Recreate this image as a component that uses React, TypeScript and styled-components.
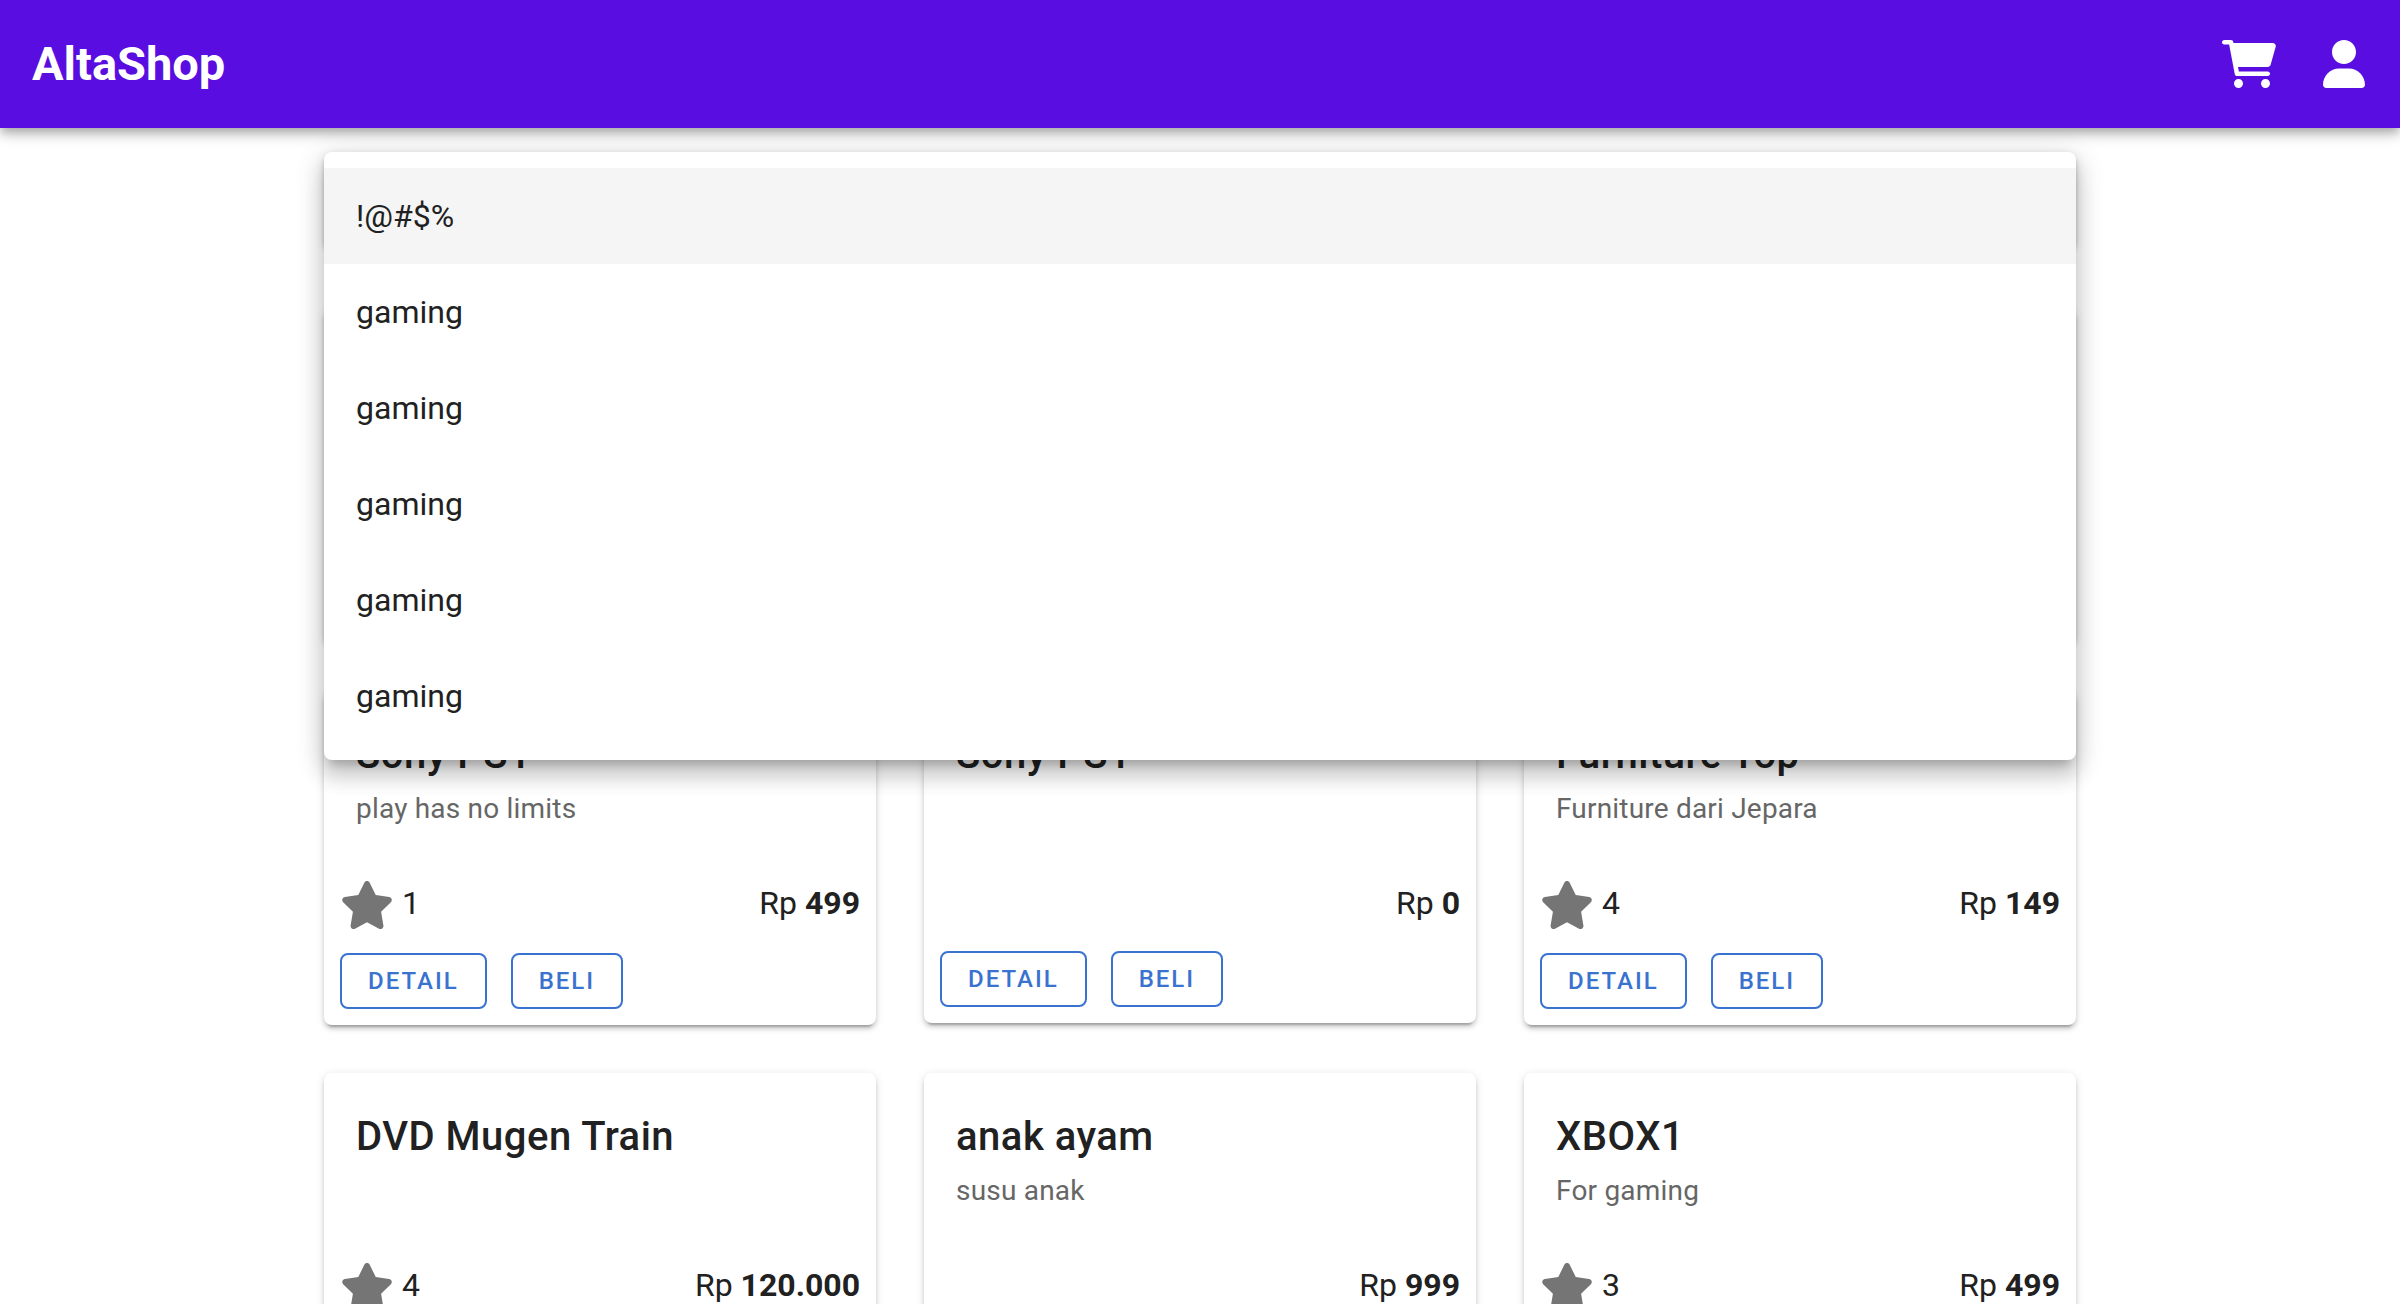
import React from "react";
import styled, { createGlobalStyle } from "styled-components";

const GlobalStyle = createGlobalStyle`
  *, *::before, *::after { box-sizing: border-box; }
  body {
    margin: 0;
    background: #ffffff;
    color: #212121;
    font-family: Roboto, "Liberation Sans", sans-serif;
    font-size: 32px;
    line-height: 48px;
  }
  h1, h2, p, ul { margin: 0; padding: 0; }
`;

const raised =
  "0 6px 2px -4px rgba(0,0,0,.2), 0 4px 4px 0 rgba(0,0,0,.14), 0 2px 10px 0 rgba(0,0,0,.12)";

const Page = styled.div`
  height: 100vh;
  overflow-y: auto;
  scrollbar-width: none;
`;

const AppBar = styled.header`
  display: flex;
  align-items: center;
  justify-content: space-between;
  height: 128px;
  padding: 0 35px 0 32px;
  background: #590de1;
  color: #ffffff;
  box-shadow: 0 4px 8px -2px rgba(0,0,0,.2), 0 8px 10px 0 rgba(0,0,0,.14),
    0 2px 20px 0 rgba(0,0,0,.12);
`;

const Brand = styled.h1`
  font-size: 47px;
  line-height: 64px;
  font-weight: 700;
`;

const Actions = styled.nav`
  display: flex;
  gap: 47px;
`;

const IconButton = styled.button`
  display: flex;
  padding: 0;
  border: 0;
  background: none;
  color: inherit;
  cursor: pointer;
`;

const Icon = styled.svg`
  display: block;
  height: 48px;
  width: auto;
  fill: currentColor;
`;

const Container = styled.main`
  max-width: 1800px;
  margin: 0 auto;
  padding: 24px;
`;

const Filter = styled.div`
  position: relative;
  margin-bottom: 61px;
`;

const FilterSelect = styled.select`
  display: block;
  width: 100%;
  height: 96px;
  padding: 0 24px;
  border: 0;
  border-radius: 8px;
  background: #ffffff;
  color: inherit;
  font: inherit;
  appearance: none;
  box-shadow: ${raised};
`;

const Menu = styled.ul`
  position: absolute;
  z-index: 8;
  top: 0;
  left: 0;
  right: 0;
  padding: 16px 0;
  border-radius: 8px;
  background: #ffffff;
  list-style: none;
  box-shadow: 0 10px 10px -6px rgba(0,0,0,.2), 0 16px 20px 2px rgba(0,0,0,.14),
    0 6px 28px 4px rgba(0,0,0,.12);
`;

const MenuItem = styled.li<{ $active: boolean }>`
  padding: 24px 32px;
  background: ${(p) => (p.$active ? "#f5f5f5" : "transparent")};
  cursor: pointer;
`;

const Grid = styled.div`
  display: grid;
  grid-template-columns: repeat(3, 1fr);
  align-items: start;
  gap: 48px;
`;

const Card = styled.article`
  border-radius: 8px;
  background: #ffffff;
  box-shadow: ${raised};
`;

const EmptyCard = styled(Card)`
  min-height: 334px;
`;

const CardHead = styled.div`
  padding: 32px;
`;

const CardTitle = styled.h2`
  font-size: 40px;
  line-height: 64px;
  font-weight: 500;
  letter-spacing: 0.0125em;
`;

const CardSubtitle = styled.p`
  min-height: 44px;
  font-size: 28px;
  line-height: 44px;
  color: #666666;
  letter-spacing: 0.007em;
`;

const CardInfo = styled.div`
  display: flex;
  align-items: flex-start;
  justify-content: space-between;
  padding: 16px 16px 8px;
`;

const Rating = styled.div`
  display: flex;
  gap: 8px;
`;

const StarIcon = styled(Icon)`
  margin-top: 2px;
  color: #757575;
`;

const Price = styled.div`
  b { font-weight: 700; }
`;

const CardActions = styled.div`
  display: flex;
  gap: 24px;
  padding: 16px;
`;

const OutlineButton = styled.button`
  height: 56px;
  padding: 0 26px;
  border: 2px solid #3973cf;
  border-radius: 8px;
  background: transparent;
  color: #3973cf;
  font: 500 24px/24px Roboto, "Liberation Sans", sans-serif;
  letter-spacing: 2px;
  text-transform: uppercase;
  cursor: pointer;
`;

const categories = ["!@#$%", "gaming", "gaming", "gaming", "gaming", "gaming"];

type Product = { name: string; description?: string; rating?: number; price: string };

const products: Product[] = [
  { name: "Sony PS1", description: "play has no limits", rating: 1, price: "499" },
  { name: "Sony PS1", price: "0" },
  { name: "Furniture Top", description: "Furniture dari Jepara", rating: 4, price: "149" },
  { name: "DVD Mugen Train", rating: 4, price: "120.000" },
  { name: "anak ayam", description: "susu anak", price: "999" },
  { name: "XBOX1", description: "For gaming", rating: 3, price: "499" },
];

function ProductCard({ name, description, rating, price }: Product) {
  return (
    <Card>
      <CardHead>
        <CardTitle>{name}</CardTitle>
        <CardSubtitle>{description}</CardSubtitle>
      </CardHead>
      <CardInfo>
        <Rating>
          {rating !== undefined && (
            <>
              <StarIcon viewBox="0 0 576 512" aria-hidden="true">
                <path d="M381.2 150.3L524.9 171.5C536.8 173.2 546.8 181.6 550.6 193.1C554.4 204.7 551.3 217.3 542.7 225.9L438.5 328.1L463.1 474.7C465.1 486.7 460.2 498.9 450.2 506C440.3 513.1 427.2 514 416.5 508.3L288.1 439.8L159.8 508.3C149 514 135.9 513.1 126 506C116.1 498.9 111.1 486.7 113.2 474.7L137.8 328.1L33.58 225.9C24.97 217.3 21.91 204.7 25.69 193.1C29.46 181.6 39.43 173.2 51.42 171.5L195 150.3L259.4 17.97C264.7 6.995 275.8 0 288.1 0C300.4 0 311.5 6.995 316.9 17.97L381.2 150.3z" />
              </StarIcon>
              <span>{rating}</span>
            </>
          )}
        </Rating>
        <Price>
          Rp <b>{price}</b>
        </Price>
      </CardInfo>
      <CardActions>
        <OutlineButton type="button">Detail</OutlineButton>
        <OutlineButton type="button">Beli</OutlineButton>
      </CardActions>
    </Card>
  );
}

export default function App() {
  return (
    <Page>
      <GlobalStyle />
      <AppBar>
        <Brand>AltaShop</Brand>
        <Actions>
          <IconButton type="button" aria-label="Cart">
            <Icon viewBox="0 0 576 512" aria-hidden="true">
              <path d="M96 0C107.5 0 117.4 8.19 119.6 19.51L121.1 32H541.8C562.1 32 578.3 52.25 572.6 72.66L518.6 264.7C514.7 278.5 502.1 288 487.8 288H170.7L179.9 336H488C501.3 336 512 346.7 512 360C512 373.3 501.3 384 488 384H159.1C148.5 384 138.6 375.8 136.4 364.5L76.14 48H24C10.75 48 0 37.25 0 24C0 10.75 10.75 0 24 0H96zM128 464C128 437.5 149.5 416 176 416C202.5 416 224 437.5 224 464C224 490.5 202.5 512 176 512C149.5 512 128 490.5 128 464zM512 464C512 490.5 490.5 512 464 512C437.5 512 416 490.5 416 464C416 437.5 437.5 416 464 416C490.5 416 512 437.5 512 464z" />
            </Icon>
          </IconButton>
          <IconButton type="button" aria-label="Account">
            <Icon viewBox="0 0 448 512" aria-hidden="true">
              <path d="M224 256c70.7 0 128-57.31 128-128s-57.3-128-128-128C153.3 0 96 57.31 96 128S153.3 256 224 256zM274.7 304H173.3C77.61 304 0 381.6 0 477.3c0 19.14 15.52 34.67 34.66 34.67h378.7C432.5 512 448 496.5 448 477.3C448 381.6 370.4 304 274.7 304z" />
            </Icon>
          </IconButton>
        </Actions>
      </AppBar>
      <Container>
        <Filter>
          <FilterSelect aria-label="Category" />
          <Menu role="listbox" aria-label="Category">
            {categories.map((category, i) => (
              <MenuItem key={i} role="option" aria-selected={i === 0} $active={i === 0}>
                {category}
              </MenuItem>
            ))}
          </Menu>
        </Filter>
        <Grid>
          <EmptyCard />
          <EmptyCard />
          <EmptyCard />
          {products.map((product, i) => (
            <ProductCard key={i} {...product} />
          ))}
        </Grid>
      </Container>
    </Page>
  );
}
